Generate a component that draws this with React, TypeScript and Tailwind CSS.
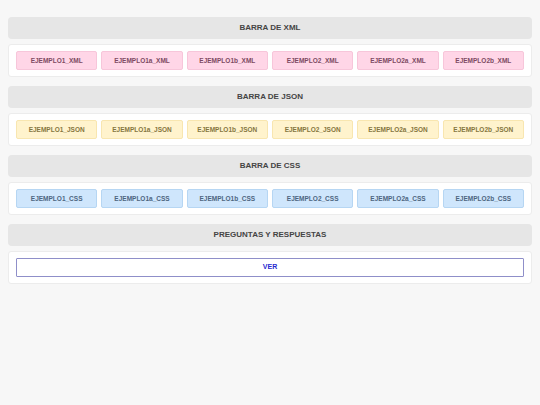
const sections = [
  {
    title: 'BARRA DE XML',
    items: ['EJEMPLO1_XML', 'EJEMPLO1a_XML', 'EJEMPLO1b_XML', 'EJEMPLO2_XML', 'EJEMPLO2a_XML', 'EJEMPLO2b_XML'],
    btn: 'bg-[#ffd6e7] border-[#f7c6da] text-[#7d4a62]',
  },
  {
    title: 'BARRA DE JSON',
    items: ['EJEMPLO1_JSON', 'EJEMPLO1a_JSON', 'EJEMPLO1b_JSON', 'EJEMPLO2_JSON', 'EJEMPLO2a_JSON', 'EJEMPLO2b_JSON'],
    btn: 'bg-[#fff3cd] border-[#f8e6b0] text-[#857640]',
  },
  {
    title: 'BARRA DE CSS',
    items: ['EJEMPLO1_CSS', 'EJEMPLO1a_CSS', 'EJEMPLO1b_CSS', 'EJEMPLO2_CSS', 'EJEMPLO2a_CSS', 'EJEMPLO2b_CSS'],
    btn: 'bg-[#cfe6fc] border-[#b6d6f3] text-[#4d6580]',
  },
];

function Header({ title }: { title: string }) {
  return (
    <div className="h-[22px] rounded-[4px] bg-[#e6e6e6] flex items-center justify-center text-[8px] font-bold text-[#444]">
      {title}
    </div>
  );
}

export default function App() {
  return (
    <div
      className="min-h-[405px] w-full bg-[#f7f7f7] px-2 pt-[17px]"
      style={{ fontFamily: '"Liberation Sans", Arial, sans-serif' }}
    >
      {sections.map((s) => (
        <div key={s.title} className="mb-[9px]">
          <Header title={s.title} />
          <div className="mt-[5px] bg-white border border-[#ececec] rounded-[3px] px-[7px] py-[6px]">
            <div className="grid grid-cols-6 gap-1">
              {s.items.map((it) => (
                <div
                  key={it}
                  className={`h-[19px] rounded-[2px] border flex items-center justify-center text-[6.5px] font-bold ${s.btn}`}
                >
                  {it}
                </div>
              ))}
            </div>
          </div>
        </div>
      ))}
      <div>
        <Header title="PREGUNTAS Y RESPUESTAS" />
        <div className="mt-[5px] bg-white border border-[#ececec] rounded-[3px] px-[7px] py-[6px]">
          <div className="h-[19px] border border-[#8f8fc9] rounded-[1px] flex items-center justify-center text-[7px] font-bold text-[#2a2ad0]">
            VER
          </div>
        </div>
      </div>
    </div>
  );
}
